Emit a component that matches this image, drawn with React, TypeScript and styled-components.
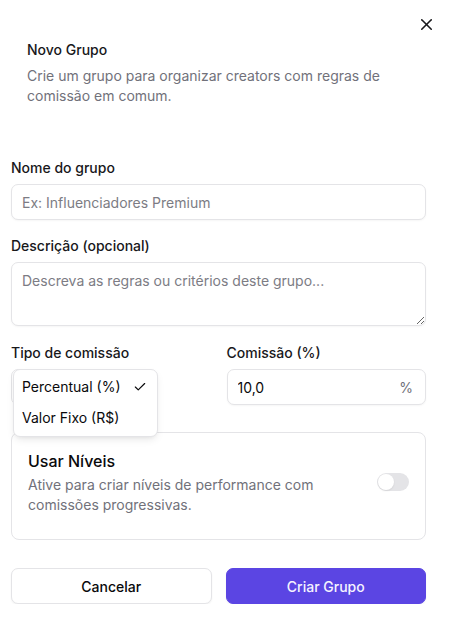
import { createGlobalStyle } from "styled-components";
import styled from "styled-components";
import { X, Check } from "lucide-react";

const GlobalStyle = createGlobalStyle`
    body {
        margin: 0;
        background: #ffffff;
        font-family: Inter, "Noto Sans", sans-serif;
        color: #09090b;
    }
    * {
        box-sizing: border-box;
    }
`;

export default function App() {
    return (
        <>
            <GlobalStyle />
            <Dialog>
                <CloseButton aria-label="Fechar">
                    <X size={19} strokeWidth={2} />
                </CloseButton>
                <Header>
                    <Title>Novo Grupo</Title>
                    <Subtitle>
                        Crie um grupo para organizar creators com regras de comissão em comum.
                    </Subtitle>
                </Header>

                <Form>
                    <Field>
                        <Label>Nome do grupo</Label>
                        <Input placeholder="Ex: Influenciadores Premium" />
                    </Field>

                    <Field>
                        <Label>Descrição (opcional)</Label>
                        <TextArea placeholder="Descreva as regras ou critérios deste grupo..." />
                    </Field>

                    <TwoCols>
                        <Field>
                            <Label>Tipo de comissão</Label>
                            <SelectWrap>
                                <SelectTrigger>Percentual (%)</SelectTrigger>
                                <Menu>
                                    <MenuItem>
                                        Percentual (%)
                                        <Check size={14} strokeWidth={2} />
                                    </MenuItem>
                                    <MenuItem>Valor Fixo (R$)</MenuItem>
                                </Menu>
                            </SelectWrap>
                        </Field>
                        <Field>
                            <Label>Comissão (%)</Label>
                            <InputWrap>
                                <Input defaultValue="10,0" />
                                <Suffix>%</Suffix>
                            </InputWrap>
                        </Field>
                    </TwoCols>

                    <Card>
                        <CardText>
                            <CardTitle>Usar Níveis</CardTitle>
                            <CardDesc>
                                Ative para criar níveis de performance com comissões progressivas.
                            </CardDesc>
                        </CardText>
                        <Toggle>
                            <Thumb />
                        </Toggle>
                    </Card>
                </Form>

                <Footer>
                    <Button>Cancelar</Button>
                    <Button $primary>Criar Grupo</Button>
                </Footer>
            </Dialog>
        </>
    );
}

const Dialog = styled.div`
    position: relative;
    width: 452px;
    padding: 40px 26px 0 11px;
`;

const CloseButton = styled.button`
    position: absolute;
    top: 14px;
    right: 16px;
    width: 20px;
    height: 20px;
    padding: 0;
    border: none;
    background: none;
    color: #18181b;
    display: flex;
    align-items: center;
    justify-content: center;
`;

const Header = styled.div`
    padding-left: 16px;
    display: flex;
    flex-direction: column;
    gap: 6px;
`;

const Title = styled.h2`
    margin: 0;
    font-size: 14px;
    line-height: 20px;
    font-weight: 500;
    color: #18181b;
`;

const Subtitle = styled.p`
    margin: 0;
    font-size: 14px;
    line-height: 20px;
    color: #71717a;
    max-width: 360px;
`;

const Form = styled.div`
    margin-top: 52px;
    display: flex;
    flex-direction: column;
    gap: 16px;
`;

const Field = styled.div`
    display: flex;
    flex-direction: column;
    gap: 6px;
`;

const Label = styled.label`
    font-size: 14px;
    line-height: 20px;
    font-weight: 500;
    color: #18181b;
`;

const Input = styled.input`
    width: 100%;
    height: 36px;
    border: 1px solid #e4e4e7;
    border-radius: 7px;
    padding: 0 10px;
    font: inherit;
    font-size: 14px;
    color: #09090b;
    background: #fff;
    box-shadow: 0 1px 2px rgba(0, 0, 0, 0.04);
    outline: none;

    &::placeholder {
        color: #7c7c84;
    }
`;

const TextArea = styled.textarea`
    width: 100%;
    height: 64px;
    border: 1px solid #e4e4e7;
    border-radius: 7px;
    padding: 8px 10px;
    font: inherit;
    font-size: 14px;
    line-height: 20px;
    resize: vertical;
    box-shadow: 0 1px 2px rgba(0, 0, 0, 0.04);
    outline: none;
    display: block;

    &::placeholder {
        color: #7c7c84;
    }
`;

const TwoCols = styled.div`
    display: grid;
    grid-template-columns: 1fr 1fr;
    gap: 16px;
    margin-top: 1px;
`;

const SelectWrap = styled.div`
    position: relative;
    height: 36px;
`;

const SelectTrigger = styled.div`
    width: 140px;
    height: 36px;
    border: 1px solid #e4e4e7;
    border-radius: 7px;
    padding: 0 10px;
    display: flex;
    align-items: center;
    font-size: 14px;
`;

const Menu = styled.div`
    position: absolute;
    top: 0;
    left: 2px;
    width: 145px;
    padding: 1px 0 3px;
    background: #fff;
    border: 1px solid #e4e4e7;
    border-radius: 7px;
    box-shadow: 0 4px 8px -2px rgba(0, 0, 0, 0.1), 0 2px 4px -2px rgba(0, 0, 0, 0.06);
    z-index: 2;
`;

const MenuItem = styled.div`
    height: 31px;
    padding: 0 10px 0 8px;
    display: flex;
    align-items: center;
    justify-content: space-between;
    font-size: 14px;
    color: #09090b;
`;

const InputWrap = styled.div`
    position: relative;
`;

const Suffix = styled.span`
    position: absolute;
    right: 13px;
    top: 50%;
    transform: translateY(-50%);
    font-size: 14px;
    color: #71717a;
`;

const Card = styled.div`
    margin-top: 11px;
    border: 1px solid #e4e4e7;
    border-radius: 8px;
    padding: 16px 16px 24px;
    display: flex;
    align-items: center;
    justify-content: space-between;
    gap: 16px;
`;

const CardText = styled.div`
    display: flex;
    flex-direction: column;
    gap: 2px;
    max-width: 320px;
`;

const CardTitle = styled.div`
    font-size: 16px;
    line-height: 24px;
    font-weight: 500;
`;

const CardDesc = styled.div`
    font-size: 14px;
    line-height: 20px;
    color: #71717a;
`;

const Toggle = styled.div`
    width: 32px;
    height: 18px;
    border-radius: 9px;
    background: #e4e4e7;
    padding: 1px;
    flex-shrink: 0;
    display: flex;
    align-items: center;
`;

const Thumb = styled.div`
    width: 16px;
    height: 16px;
    border-radius: 50%;
    background: #fff;
    box-shadow: 0 1px 2px rgba(0, 0, 0, 0.08);
`;

const Footer = styled.div`
    margin-top: 28px;
    display: grid;
    grid-template-columns: 1fr 1fr;
    gap: 14px;
`;

const Button = styled.button<{ $primary?: boolean }>`
    height: 36px;
    border-radius: 7px;
    font: inherit;
    font-size: 14px;
    font-weight: 500;
    border: 1px solid ${p => (p.$primary ? "#5b45e3" : "#e4e4e7")};
    background: ${p => (p.$primary ? "#5b45e3" : "#ffffff")};
    color: ${p => (p.$primary ? "#f5f3ff" : "#09090b")};
    box-shadow: 0 1px 2px rgba(0, 0, 0, 0.05);
`;
